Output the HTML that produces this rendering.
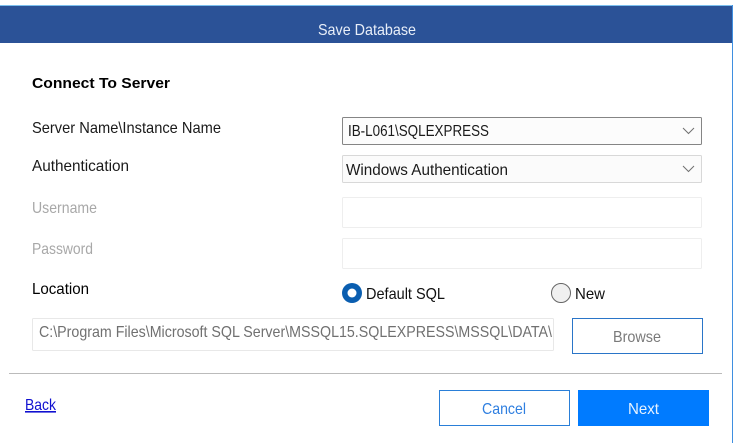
<!DOCTYPE html>
<html>
<head>
<meta charset="utf-8">
<title>Save Database</title>
<style>
html,body{margin:0;padding:0;background:#fff;width:733px;height:443px;overflow:hidden}
svg{display:block}
text{font-family:"Liberation Sans",sans-serif;font-size:16px;fill:#1a1a1a}
</style>
</head>
<body>
<svg width="733" height="443" viewBox="0 0 733 443" xmlns="http://www.w3.org/2000/svg">
<rect width="733" height="443" fill="#fff"/>
<rect x="0" y="5" width="733" height="1" fill="#7cc0ee"/>
<rect x="0" y="6" width="732" height="37" fill="#2b5297"/>
<rect x="732" y="5" width="1" height="438" fill="#3f8fe0"/>
<text x="318" y="35" textLength="98" lengthAdjust="spacingAndGlyphs" style="fill:#e8eef8">Save Database</text>

<text x="32" y="88" textLength="138" lengthAdjust="spacingAndGlyphs" style="font-weight:bold;fill:#000;font-size:15px">Connect To Server</text>
<text x="32" y="133" textLength="189" lengthAdjust="spacingAndGlyphs">Server Name\Instance Name</text>
<text x="32" y="171" textLength="97" lengthAdjust="spacingAndGlyphs">Authentication</text>
<text x="32" y="213" textLength="65" lengthAdjust="spacingAndGlyphs" style="fill:#a8a8a8">Username</text>
<text x="32" y="254" textLength="61" lengthAdjust="spacingAndGlyphs" style="fill:#a8a8a8">Password</text>
<text x="32" y="294" textLength="57" lengthAdjust="spacingAndGlyphs" style="fill:#000">Location</text>

<rect x="342.500" y="117.500" width="359" height="27" rx="1" fill="#fcfcfc" stroke="#858585"/>
<text x="348" y="136" textLength="141" lengthAdjust="spacingAndGlyphs">IB-L061\SQLEXPRESS</text>
<path d="M683 128l5.500 5.500 5.500-5.500" fill="none" stroke="#707070"/>

<rect x="342.500" y="155.500" width="359" height="27" rx="1" fill="#fbfbfb" stroke="#d8d8d8"/>
<text x="346" y="175" textLength="162" lengthAdjust="spacingAndGlyphs">Windows Authentication</text>
<path d="M683 166l5.500 5.500 5.500-5.500" fill="none" stroke="#707070"/>

<rect x="342.500" y="197.500" width="359" height="30" rx="1" fill="#fff" stroke="#eeeeee"/>
<rect x="342.500" y="238.500" width="359" height="30" rx="1" fill="#fff" stroke="#eeeeee"/>

<circle cx="352" cy="293" r="10" fill="#0a5eb0"/>
<circle cx="352" cy="293" r="4.500" fill="#fff"/>
<text x="366" y="299" textLength="79" lengthAdjust="spacingAndGlyphs" style="fill:#111">Default SQL</text>
<circle cx="561" cy="293" r="9.500" fill="#f0f0f0" stroke="#666" stroke-width="1"/>
<text x="575" y="299" textLength="30" lengthAdjust="spacingAndGlyphs" style="fill:#111">New</text>

<rect x="32.500" y="318.500" width="521" height="32" rx="1" fill="#fff" stroke="#e8e8e8"/>
<text x="39" y="337" textLength="513" lengthAdjust="spacingAndGlyphs" style="fill:#707070">C:\Program Files\Microsoft SQL Server\MSSQL15.SQLEXPRESS\MSSQL\DATA\</text>
<rect x="572.500" y="318.500" width="130" height="35" fill="#fff" stroke="#2a75c8"/>
<text x="613" y="342" textLength="48" lengthAdjust="spacingAndGlyphs" style="fill:#7a7a7a">Browse</text>

<rect x="9" y="373" width="713" height="1" fill="#bbbbbb"/>

<text x="25" y="410" textLength="31" lengthAdjust="spacingAndGlyphs" style="fill:#1010d0;text-decoration:underline">Back</text>

<rect x="439.500" y="390.500" width="130" height="35" fill="#fff" stroke="#2a7fd8"/>
<text x="482" y="414" textLength="44" lengthAdjust="spacingAndGlyphs" style="fill:#2f7fe0">Cancel</text>
<rect x="578" y="390" width="131" height="36" fill="#007bff"/>
<text x="628" y="414" textLength="31" lengthAdjust="spacingAndGlyphs" style="fill:#e6f2ff">Next</text>
</svg>
</body>
</html>
